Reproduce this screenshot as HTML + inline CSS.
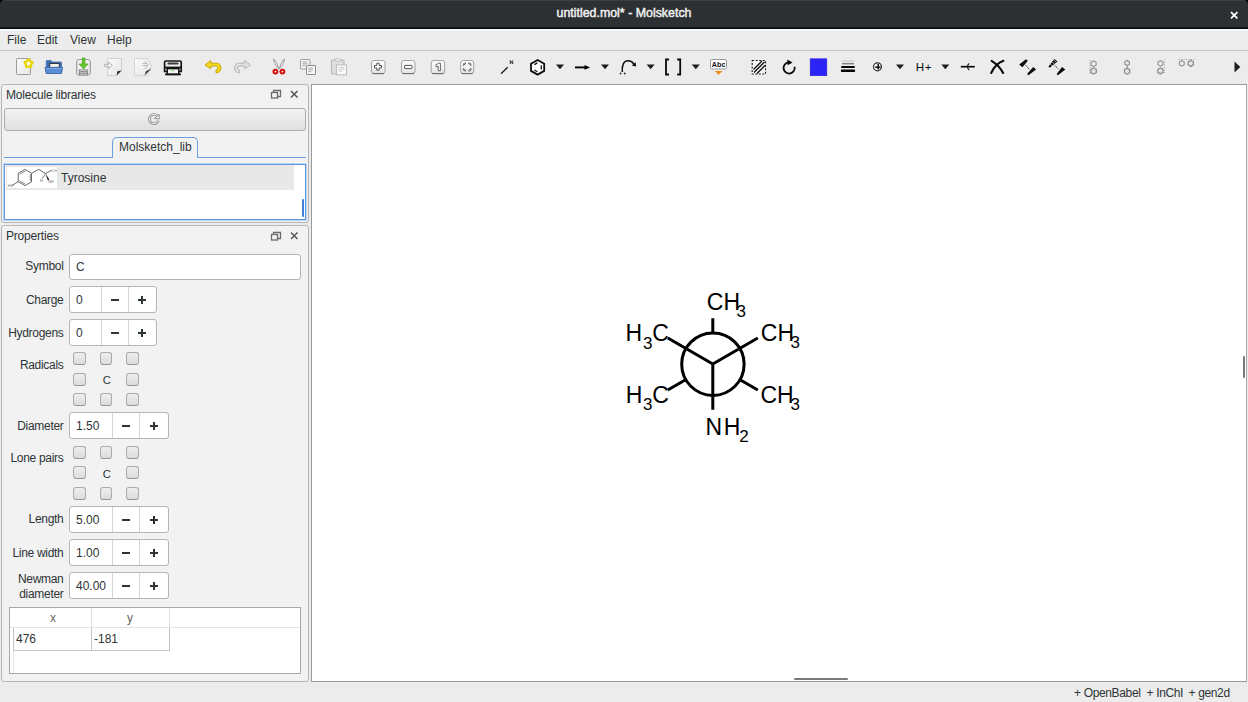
<!DOCTYPE html>
<html><head><meta charset="utf-8">
<style>
*{box-sizing:border-box;margin:0;padding:0}
html,body{width:1248px;height:702px;overflow:hidden;background:#ececec;font-family:"Liberation Sans",sans-serif;font-size:12px;color:#2e3436}
.a{position:absolute}
#title{left:0;top:0;width:1248px;height:27px;background:#2d3033;border-top:1px solid #3b3f42;border-radius:5px 5px 0 0}
#title .t{left:0;width:1248px;top:6px;text-align:center;color:#f0f0f0;font-weight:normal;font-size:12.4px;line-height:13px;-webkit-text-stroke:0.45px #f0f0f0}
#tline1{left:0;top:27px;width:1248px;height:1px;background:#141719}
#tline2{left:0;top:28px;width:1248px;height:1px;background:#0a0c0c}
#tline3{left:0;top:29px;width:1248px;height:2px;background:linear-gradient(#fdfdfd,#f4f4f4)}
.menu{top:34px;line-height:12px;font-size:12px;color:#2e3436}
#mline{left:0;top:50px;width:1248px;height:1px;background:#c8c8c8}
#mline2{left:0;top:50px;width:1248px;height:1px;background:#f8f8f8}
.dock{left:1px;width:308px;border:1px solid #b6b6b6;border-radius:3px;background:#f2f2f2}
.dtitle{left:6px;line-height:12px;color:#2e3436;letter-spacing:-0.2px}
.fl{width:10px;height:9px}
.cl{width:8px;height:8px}
#canvas{left:311px;top:84px;width:936px;height:598px;background:#fff;border:1px solid #9a9a9a;border-right-color:#a8a8a8}
.lbl{text-align:right;width:60px;left:3.5px;line-height:12px;letter-spacing:-0.3px;white-space:nowrap}
.spin{left:69px;height:26px;background:#fff;border:1px solid #b5b5b5;border-radius:3px}
.spin .v{left:6px;top:7px;line-height:12px;color:#2e3436}
.pm{background:#2e3436}
.spin .d1,.spin .d2{top:0;width:1px;height:25px;background:#d4d4d4}
.cb{width:13px;height:13px;border:1px solid #ababab;border-bottom-color:#959595;border-radius:3px;background:linear-gradient(#eeeeee,#dcdcdc)}
#status{left:0;top:682px;width:1248px;height:20px;background:#ececec}
.st{top:5px;line-height:12px;letter-spacing:-0.35px;white-space:nowrap}
</style></head><body>
<div class="a" style="left:0;top:0;width:1248px;height:6px;background:#000"></div><div id="title" class="a"><div class="t a">untitled.mol* - Molsketch</div>
<svg class="a" style="left:1229px;top:8.5px" width="10" height="10" viewBox="0 0 10 10"><path d="M2 2.2L8.4 8.4M8.4 2.2L2 8.4" stroke="#fff" stroke-width="1.7"/></svg>
</div>
<div id="tline1" class="a"></div><div id="tline2" class="a"></div><div id="tline3" class="a"></div>
<div class="a menu" style="left:7px">File</div>
<div class="a menu" style="left:37px">Edit</div>
<div class="a menu" style="left:70px">View</div>
<div class="a menu" style="left:107px">Help</div>
<div id="mline" class="a"></div>

<!-- TOOLBAR -->
<svg class="a" style="left:0;top:0" width="1248" height="84" viewBox="0 0 1248 84">
<defs>
<linearGradient id="gp" x1="0" y1="0" x2="1" y2="1"><stop offset="0" stop-color="#fafafa"/><stop offset="1" stop-color="#e6e6e6"/></linearGradient>
<linearGradient id="gz" x1="0" y1="0" x2="0" y2="1"><stop offset="0" stop-color="#ffffff"/><stop offset="1" stop-color="#e4e4e4"/></linearGradient>
</defs>
<!-- 1 new -->
<rect x="16.5" y="58.5" width="14" height="16" rx="1" fill="url(#gp)" stroke="#9a9a9a"/>
<path d="M28.50 58.90 L30.38 60.91 L32.87 62.08 L31.54 64.49 L31.20 67.22 L28.50 66.70 L25.80 67.22 L25.46 64.49 L24.13 62.08 L26.62 60.91z" fill="#e9d600" stroke="#e9d600" stroke-width="1.6" stroke-linejoin="round"/>
<path d="M28.50 61.00 L29.26 62.55 L30.97 62.80 L29.74 64.00 L30.03 65.70 L28.50 64.90 L26.97 65.70 L27.26 64.00 L26.03 62.80 L27.74 62.55z" fill="#fff"/>
<!-- 2 open -->
<path d="M46.2 61.2 q0 -0.8 0.8 -0.8 h4 l1.5 1.5 h8.3 q0.8 0 0.8 0.8 v9.5 h-15.4z" fill="#3f6fb8" stroke="#2f5da5" stroke-width="0.6"/>
<rect x="49.8" y="63.5" width="9.4" height="4.2" fill="#f4f2ea" stroke="#2a2a2a" stroke-width="0.9"/>
<path d="M45 67.4 h17.6 l-1.2 6.1 h-15.2z" fill="#5a8fd4" stroke="#2d5aa0" stroke-width="0.8"/>
<path d="M46 68.3 h15.6" stroke="#8ab4e8" stroke-width="0.8"/>
<!-- 3 save -->
<rect x="76.5" y="59.5" width="14" height="15.6" rx="2.2" fill="#dcdcdc" stroke="#a0a0a0"/>
<rect x="78.5" y="60.5" width="10" height="8" fill="#fafafa"/>
<path d="M78.5 62.6 h10 M78.5 64.6 h10" stroke="#d8d0e4" stroke-width="0.6"/>
<rect x="79.5" y="70" width="8" height="5" fill="#f2f2f2" stroke="#7a7a7a" stroke-width="0.8"/>
<rect x="80.8" y="71.5" width="2.2" height="2.2" fill="none" stroke="#666" stroke-width="0.7"/>
<rect x="84.1" y="71.5" width="2.2" height="2.2" fill="none" stroke="#666" stroke-width="0.7"/>
<path d="M82.3 58 h2.6 v6 h3.2 l-4.5 5 l-4.5 -5 h3.2z" fill="#66c82e" stroke="#45a015" stroke-width="0.7"/>
<!-- 4 import -->
<path d="M107.5 58.5 h14 v12.5 l-4.5 4.5 h-9.5z" fill="url(#gp)" stroke="#d0d0d0"/>
<path d="M121.6 70.5 l-5 5 l0.8 -4.2z" fill="#2a2a2a"/>
<path d="M104.6 64.3 h4.2 v-2.2 l3.4 3.2 l-3.4 3.2 v-2.2 h-4.2z" fill="#fbfbfb" stroke="#a8a8a8" stroke-width="0.9"/>
<!-- 5 export -->
<path d="M134.5 58.6 h13 l4 7.5 l-4 9.5 h-13z" fill="url(#gp)" stroke="#d4d4d4"/>
<path d="M151.5 68.5 l-7 7 l1.5 -4.2z" fill="#2a2a2a"/>
<path d="M142.5 63.5 h4.5 M142.5 65.5 h4.5 M145 61 l3 4 l-3 4" fill="none" stroke="#bdbdbd" stroke-width="1"/>
<!-- 6 print -->
<path d="M164.6 62.2 q0 -1.2 1.2 -1.2 h14.2 q1.2 0 1.2 1.2 v9.3 h-16.6z" fill="#eeeeee" stroke="#161616" stroke-width="1.7"/>
<rect x="167.5" y="62.6" width="11" height="1.8" rx="0.6" fill="#3a3a3a"/>
<rect x="165" y="66.6" width="16" height="1.9" fill="#161616"/>
<rect x="167.2" y="68.6" width="11.6" height="5.8" fill="#f4f4f4" stroke="#121212" stroke-width="1.5"/>
<path d="M169.4 69.8 q3 0.2 5 1.4" stroke="#8ad874" stroke-width="1" fill="none"/>
<rect x="165" y="73.4" width="16" height="1.8" rx="0.6" fill="#121212"/>
<!-- 7 undo -->
<path d="M205 65 l5.8 -4.6 v2.8 h5.4 q4.6 0 4.6 4.8 q0 4.8 -4.8 4.8 v-2.8 q2 0 2 -2 q0 -2 -2 -2 h-5.2 v2.6z" fill="#f2dc20" stroke="#c8a800" stroke-width="1"/>
<!-- 8 redo -->
<path d="M250.5 65 l-5.8 -4.6 v2.8 h-5.4 q-4.6 0 -4.6 4.8 q0 4.8 4.8 4.8 v-2.8 q-2 0 -2 -2 q0 -2 2 -2 h5.2 v2.6z" fill="#e2e2e2" stroke="#b4b4b4" stroke-width="1"/>
<!-- 9 cut -->
<path d="M273.8 58.8 q-0.6 4.5 5 10 q-1.2 -5.5 -5 -10z" fill="#f4f4f4" stroke="#8a8a8a" stroke-width="0.8"/>
<path d="M284.2 58.8 q0.6 4.5 -5 10 q1.2 -5.5 5 -10z" fill="#f4f4f4" stroke="#8a8a8a" stroke-width="0.8"/>
<circle cx="275.4" cy="71.6" r="2.9" fill="#d40c0c"/>
<circle cx="282.4" cy="71.6" r="2.9" fill="#d40c0c"/>
<circle cx="275.4" cy="71.6" r="0.9" fill="#fff"/>
<circle cx="282.4" cy="71.6" r="0.9" fill="#fff"/>
<!-- 10 copy -->
<rect x="300.5" y="59.5" width="9.5" height="9.5" rx="1" fill="#f2f2f2" stroke="#9c9c9c"/>
<path d="M302.5 62 h5 M302.5 63.8 h5 M302.5 65.6 h3" stroke="#a8a8a8" stroke-width="1"/>
<rect x="306.5" y="65.5" width="9" height="9" rx="0.5" fill="#f6f6f6" stroke="#8c8c8c"/>
<path d="M308.3 68 h4.5 M308.3 69.8 h4.5 M308.3 71.6 h3" stroke="#aaaaaa" stroke-width="1"/>
<!-- 11 paste -->
<rect x="331.5" y="60" width="12.5" height="14" rx="1" fill="#dedede" stroke="#b4b4b4"/>
<rect x="335" y="58.8" width="5.5" height="2.6" rx="1" fill="#ececec" stroke="#b8b8b8" stroke-width="0.8"/>
<rect x="336.5" y="65" width="10" height="9.8" fill="#fafafa" stroke="#bcbcbc"/>
<path d="M338.5 67.5 h6 M338.5 69.3 h6 M338.5 71.1 h4" stroke="#cacaca" stroke-width="0.9"/>
<!-- 12-15 zoom -->
<g stroke="#a2a2a2" fill="url(#gz)">
<rect x="371.5" y="60.5" width="13.5" height="13" rx="2.5"/>
<rect x="401.5" y="60.5" width="13.5" height="13" rx="2.5"/>
<rect x="431.2" y="60.5" width="13.5" height="13" rx="2.5"/>
<rect x="460.7" y="60.5" width="13" height="13" rx="2.5"/>
</g>
<g stroke="#6e6e6e" stroke-width="1.1" fill="none">
<path d="M372.5 73.6 h11.5"/><path d="M402.5 73.6 h11.5"/><path d="M432.2 73.6 h11.5"/><path d="M461.7 73.6 h11"/>
</g>
<path d="M376.8 63.2 h2.4 v2.3 h2.3 v2.4 h-2.3 v2.3 h-2.4 v-2.3 h-2.3 v-2.4 h2.3z" fill="#fff" stroke="#555" stroke-width="1"/>
<rect x="404.6" y="65.4" width="7.4" height="3.2" rx="0.5" fill="#fff" stroke="#555" stroke-width="1"/>
<path d="M435.6 65 L438.6 63.2 H440.4 V70.8 H438.2 V66 L436.4 66.9z" fill="#fff" stroke="#555" stroke-width="0.9"/>
<g fill="#fff" stroke="#555" stroke-width="0.9">
<path d="M463.4 65.6 v-1.2 q0 -1.2 1.2 -1.2 h1.4z"/>
<path d="M471 65.6 v-1.2 q0 -1.2 -1.2 -1.2 h-1.4z"/>
<path d="M463.4 68.4 v1.2 q0 1.2 1.2 1.2 h1.4z"/>
<path d="M471 68.4 v1.2 q0 1.2 -1.2 1.2 h-1.4z"/>
</g>
<!-- 16 line N -->
<path d="M501 73.8 l6.7 -6.6" stroke="#1a1a1a" stroke-width="1.3"/>
<path d="M510.3 64 V60.4 L512.7 64 V60.4" fill="none" stroke="#3a3a3a" stroke-width="1"/>
<!-- 17 hexagon -->
<path d="M537.6 60 L544.2 63.7 V70.9 L537.6 74.6 L531 70.9 V63.7z" fill="#fff" stroke="#0c0c0c" stroke-width="1.8"/>
<path d="M534.4 64.6 L537.4 62.9 M541.3 65.2 V69.4 M534.4 70 L537.4 71.7" stroke="#111" stroke-width="1.3"/>
<!-- dropdowns -->
<g fill="#1b1e20">
<path d="M556 64.6 h8 l-4 4.6z"/>
<path d="M601 64.6 h8 l-4 4.6z"/>
<path d="M646.6 64.6 h8 l-4 4.6z"/>
<path d="M691.8 64.6 h8 l-4 4.6z"/>
<path d="M896 64.6 h8 l-4 4.6z"/>
<path d="M941.3 64.6 h8 l-4 4.6z"/>
</g>
<!-- 19 arrow -->
<path d="M575 67.4 h10" stroke="#050505" stroke-width="1.9"/>
<path d="M584.5 65 l5.6 2.4 l-5.6 2.4z" fill="#050505"/>
<!-- 21 curved arrow -->
<path d="M622.3 72 q-0.5 -11 5 -11.3 q4.5 -0.3 6.8 3.8" fill="none" stroke="#0a0a0a" stroke-width="1.5"/>
<path d="M631.8 65.6 l3.8 -3.4 l0.5 4.4z" fill="#0a0a0a"/>
<circle cx="620.6" cy="73.5" r="0.9" fill="#222"/><circle cx="624.7" cy="73.5" r="0.9" fill="#222"/>
<!-- 23 brackets -->
<path d="M669 59.5 h-3 v15 h3 M677.2 59.5 h3 v15 h-3" fill="none" stroke="#0a0a0a" stroke-width="1.8"/>
<!-- 25 abc -->
<rect x="710.5" y="59.5" width="16" height="9.5" rx="1.5" fill="#fff" stroke="#9a9a9a"/>
<text x="711.8" y="66.8" font-family="Liberation Sans" font-size="7.6" font-weight="bold" fill="#111" textLength="13.6" lengthAdjust="spacingAndGlyphs">Abc</text>
<path d="M714.8 71 h7.7 l-3.85 3.8z" fill="#f08a1a"/>
<!-- 26 hatch -->
<rect x="752.2" y="60.5" width="13.3" height="13.5" fill="#fafafa" stroke="#1a1a1a" stroke-width="1.1" stroke-dasharray="2 1.5"/>
<path d="M753.5 69.5 l8.5 -8.5 M754 72.5 l10.5 -10.5 M757 73.5 l8 -8" stroke="#111" stroke-width="1.4"/>
<!-- 27 rotate -->
<path d="M790.8 62.6 a5.6 5.6 0 1 0 3.8 4.2" fill="none" stroke="#0a0a0a" stroke-width="1.8"/>
<path d="M787.2 59.6 l5.3 2.9 l-4.8 2.8z" fill="#0a0a0a"/>
<!-- 28 blue -->
<rect x="810.2" y="58.8" width="16.6" height="16.9" fill="#2d24f6" stroke="#2818d8" stroke-width="0.6"/>
<!-- 29 lines -->
<path d="M842 61.2 h12" stroke="#bdbdbd" stroke-width="0.8"/>
<path d="M842 63.7 h12" stroke="#7a7a7a" stroke-width="1.3"/>
<path d="M842 67 h12" stroke="#050505" stroke-width="1.8" stroke-linecap="round"/>
<path d="M842 70.8 h12" stroke="#050505" stroke-width="2.4" stroke-linecap="round"/>
<!-- 30 circle plus -->
<circle cx="877.5" cy="66.8" r="4" fill="#f4f4f4" stroke="#333" stroke-width="1.2"/>
<path d="M878.2 64 v5.6 M875.3 67.2 h5.3" stroke="#0a0a0a" stroke-width="1.5"/>
<!-- 32 H+ -->
<text x="915.8" y="71.2" font-family="Liberation Sans" font-size="11.6" fill="#0a0a0a" dx="0 0.6">H+</text>
<!-- 34 bond -->
<path d="M960.8 66.7 h14" stroke="#0a0a0a" stroke-width="1.7"/>
<path d="M969.2 63.4 q-3.5 3.3 0 6.6" fill="none" stroke="#111" stroke-width="1.1"/>
<!-- 35 X -->
<path d="M991.6 60.8 q8 5 11.5 12.2 M1003.4 60.8 q-8 2.8 -12.2 12.2" fill="none" stroke="#0a0a0a" stroke-width="2.1" stroke-linecap="round"/>
<!-- 36 wedge hash -->
<path d="M1026 59.2 L1027.9 60.7 L1022.4 67.2 L1019.2 64.6z" fill="#0a0a0a"/>
<path d="M1025.8 65.2 l3.4 4" stroke="#222" stroke-width="1" stroke-dasharray="1.2 0.8"/>
<path d="M1033.2 67.1 L1036.1 69.6 L1028.4 75.3 L1027.1 74z" fill="#0a0a0a"/>
<!-- 37 -->
<path d="M1048.5 66.4 L1049.7 67.7 L1057.5 61.4 L1054.4 59.1z" fill="#0a0a0a"/>
<path d="M1050.2 63.8 l2.2 2.2 M1052.2 61.9 l2.4 2.4 M1054 60.3 l2.4 2.2" stroke="#eee" stroke-width="0.7"/>
<path d="M1054.6 65.3 l4.2 4" stroke="#222" stroke-width="1" stroke-dasharray="1.2 0.8"/>
<path d="M1062 67.1 L1065.3 69.6 L1057.9 75.3 L1056.7 74z" fill="#0a0a0a"/>
<!-- 38-41 align grey -->
<g fill="none" stroke="#8e8e8e" stroke-width="1.1">
<path d="M1096.11 65.25 L1093.60 66.70 L1091.09 65.25 L1091.09 62.35 L1093.60 60.90 L1096.11 62.35z"/>
<path d="M1096.28 72.55 L1093.60 74.10 L1090.92 72.55 L1090.92 69.45 L1093.60 67.90 L1096.28 69.45z" stroke-width="1.3" fill="#e6e6e6"/>
<path d="M1129.35 64.30 L1127.10 65.60 L1124.85 64.30 L1124.85 61.70 L1127.10 60.40 L1129.35 61.70z"/>
<path d="M1129.70 72.70 L1127.10 74.20 L1124.50 72.70 L1124.50 69.70 L1127.10 68.20 L1129.70 69.70z" stroke-width="1.3" fill="#e6e6e6"/>
<path d="M1162.82 64.80 L1160.40 66.20 L1157.98 64.80 L1157.98 62.00 L1160.40 60.60 L1162.82 62.00z"/>
<path d="M1163.00 72.40 L1160.40 73.90 L1157.80 72.40 L1157.80 69.40 L1160.40 67.90 L1163.00 69.40z" stroke-width="1.3" fill="#e6e6e6"/>
<path d="M1184.22 64.80 L1181.80 66.20 L1179.38 64.80 L1179.38 62.00 L1181.80 60.60 L1184.22 62.00z"/>
<path d="M1193.40 64.90 L1190.80 66.40 L1188.20 64.90 L1188.20 61.90 L1190.80 60.40 L1193.40 61.90z" stroke-width="1.3" fill="#e6e6e6"/>
</g>
<g stroke="#9a9a9a" stroke-width="1" stroke-dasharray="1 1.5">
<path d="M1090.1 60 v15"/><path d="M1164.3 59.5 v15"/><path d="M1178.5 59.5 h16"/>
</g>
<path d="M1127.1 66 v2" stroke="#8a8a8a"/>
<!-- 42 arrow right -->
<path d="M1234.5 61.5 l5.8 5.5 l-5.8 5.5z" fill="#1b1e20"/>
</svg>


<!-- DOCK 1 -->
<div class="a dock" style="top:84px;height:139px"></div>
<div class="a dtitle" style="top:89px">Molecule libraries</div>
<svg class="a" style="left:268px;top:86px" width="34" height="16" viewBox="268 86 34 16">
<rect x="271.5" y="92.5" width="6" height="5.5" fill="none" stroke="#6a6a6a" stroke-width="1.3"/>
<path d="M273.5 92.5 v-2 h7 v6 h-3" fill="none" stroke="#6a6a6a" stroke-width="1.3"/>
<path d="M291 91 l6.5 6.5 M297.5 91 l-6.5 6.5" stroke="#555" stroke-width="1.5"/>
</svg>
<div class="a" style="left:4px;top:108px;width:302px;height:23px;border:1px solid #ababab;border-radius:3px;background:linear-gradient(#f2f2f2,#e0e0e0)"></div>
<svg class="a" style="left:144px;top:110px" width="20" height="20" viewBox="144 110 20 20">
<path d="M157.6 116.2 a4.6 4.6 0 1 0 0.8 4.4" fill="none" stroke="#8c8c8c" stroke-width="2.6"/>
<path d="M157.6 116.2 a4.6 4.6 0 1 0 0.8 4.4" fill="none" stroke="#f8f8f8" stroke-width="1"/>
<path d="M154.6 118.4 l4.6 -4 v4.6z" fill="#f6f6f6" stroke="#8c8c8c" stroke-width="0.9"/>
</svg>
<!-- tab bar -->
<div class="a" style="left:4px;top:157px;width:302px;height:1px;background:#6aa0dd"></div>
<div class="a" style="left:112px;top:137px;width:86px;height:21px;border:1px solid #6aa0dd;border-bottom:none;border-radius:5px 5px 0 0;background:#f2f2f2"></div>
<div class="a" style="left:119px;top:141px;line-height:12px;color:#2e3436">Molsketch_lib</div>
<!-- list -->
<div class="a" style="left:4px;top:164px;width:302px;height:56px;border:1px solid #5a98e0;box-shadow:0 0 0 0.5px #8ab8ec;background:#fff"></div>
<div class="a" style="left:6px;top:165px;width:288px;height:25px;background:#e8e8e8"></div>
<div class="a" style="left:7px;top:167px;width:50px;height:21px;background:#fff"></div>
<svg class="a" style="left:7px;top:167px" width="50" height="21" viewBox="7 167 50 21">
<g fill="none" stroke="#555" stroke-width="0.9">
<path d="M25 169.4 L31.5 173.3 V181.9 L25 185.6 L18.2 181.6 V173.4z"/>
<path d="M18.2 181.6 L11.8 185.6 M31.5 173.3 L38.7 169.3 L45.5 173.5 L51.9 170.1"/>
<path d="M19.6 174.3 L25.2 171 M19.6 180.8 L25 184 M30.2 174.2 V181" stroke-width="0.7"/>
</g>
<path d="M45.5 173.5 L42 179" stroke="#666" stroke-width="1.2" stroke-dasharray="0.8 0.7"/>
<path d="M45.3 173.2 L49.3 179.4 L47.9 180.4z" fill="#111"/>
<text x="8" y="187.4" font-size="3.6" font-family="Liberation Sans" fill="#666">HO</text>
<text x="40" y="181.6" font-size="3.6" font-family="Liberation Sans" fill="#666">H</text>
<text x="48.3" y="182.6" font-size="3.6" font-family="Liberation Sans" fill="#666">NH</text>
<text x="52" y="171.6" font-size="3.6" font-family="Liberation Sans" fill="#888">CH</text>
</svg>
<div class="a" style="left:61px;top:172px;line-height:12px;color:#2e3436">Tyrosine</div>
<div class="a" style="left:302px;top:199px;width:2px;height:18px;background:#3c82dc;border-radius:1px"></div>

<!-- DOCK 2 -->
<div class="a dock" style="top:225px;height:457px"></div>
<div class="a dtitle" style="top:230px">Properties</div>
<svg class="a" style="left:268px;top:228px" width="34" height="16" viewBox="268 228 34 16">
<rect x="271.5" y="234.5" width="6" height="5.5" fill="none" stroke="#6a6a6a" stroke-width="1.3"/>
<path d="M273.5 234.5 v-2 h7 v6 h-3" fill="none" stroke="#6a6a6a" stroke-width="1.3"/>
<path d="M291 232.5 l6.5 6.5 M297.5 232.5 l-6.5 6.5" stroke="#555" stroke-width="1.5"/>
</svg>

<div class="a lbl" style="top:260px">Symbol</div>
<div class="a" style="left:69px;top:254px;width:232px;height:26px;background:#fff;border:1px solid #b3b3b3;border-radius:3px"><div class="a" style="left:6px;top:6px;line-height:12px">C</div></div>

<div class="a lbl" style="top:294px">Charge</div>
<div class="a spin" style="top:286px;width:88px;height:27px"><div class="a v">0</div><div class="a d1" style="left:31px"></div><div class="a d2" style="left:58px"></div>
<div class="a pm" style="left:40.8px;top:11.799999999999999px;width:8px;height:1.8px"></div>
<div class="a pm" style="left:67.9px;top:11.799999999999999px;width:8px;height:1.8px"></div><div class="a pm" style="left:71.0px;top:8.7px;width:1.8px;height:8px"></div></div>

<div class="a lbl" style="top:327px">Hydrogens</div>
<div class="a spin" style="top:319px;width:88px;height:27px"><div class="a v">0</div><div class="a d1" style="left:31px"></div><div class="a d2" style="left:58px"></div>
<div class="a pm" style="left:40.8px;top:11.799999999999999px;width:8px;height:1.8px"></div>
<div class="a pm" style="left:67.9px;top:11.799999999999999px;width:8px;height:1.8px"></div><div class="a pm" style="left:71.0px;top:8.7px;width:1.8px;height:8px"></div></div>

<div class="a lbl" style="top:359px">Radicals</div>
<div class="a cb" style="left:73px;top:352px"></div><div class="a cb" style="width:12px;left:100px;top:352px"></div><div class="a cb" style="left:126px;top:352px"></div>
<div class="a cb" style="left:73px;top:373px"></div><div class="a" style="left:102.8px;top:373.5px;line-height:12px;font-size:11.3px">C</div><div class="a cb" style="left:126px;top:373px"></div>
<div class="a cb" style="left:73px;top:393px"></div><div class="a cb" style="width:12px;left:100px;top:393px"></div><div class="a cb" style="left:126px;top:393px"></div>

<div class="a lbl" style="top:420px">Diameter</div>
<div class="a spin" style="top:412px;width:100px;height:27px"><div class="a v">1.50</div><div class="a d1" style="left:42px"></div><div class="a d2" style="left:69px"></div>
<div class="a pm" style="left:52px;top:11.799999999999999px;width:8px;height:1.8px"></div>
<div class="a pm" style="left:79.8px;top:11.799999999999999px;width:8px;height:1.8px"></div><div class="a pm" style="left:82.89999999999999px;top:8.7px;width:1.8px;height:8px"></div></div>

<div class="a lbl" style="top:452px">Lone pairs</div>
<div class="a cb" style="left:73px;top:446px"></div><div class="a cb" style="width:12px;left:100px;top:446px"></div><div class="a cb" style="left:126px;top:446px"></div>
<div class="a cb" style="left:73px;top:466px"></div><div class="a" style="left:102.8px;top:467.5px;line-height:12px;font-size:11.3px">C</div><div class="a cb" style="left:126px;top:466px"></div>
<div class="a cb" style="left:73px;top:487px"></div><div class="a cb" style="width:12px;left:100px;top:487px"></div><div class="a cb" style="left:126px;top:487px"></div>

<div class="a lbl" style="top:513px">Length</div>
<div class="a spin" style="top:506px;width:100px;height:27px"><div class="a v">5.00</div><div class="a d1" style="left:42px"></div><div class="a d2" style="left:69px"></div>
<div class="a pm" style="left:52px;top:11.799999999999999px;width:8px;height:1.8px"></div>
<div class="a pm" style="left:79.8px;top:11.799999999999999px;width:8px;height:1.8px"></div><div class="a pm" style="left:82.89999999999999px;top:8.7px;width:1.8px;height:8px"></div></div>

<div class="a lbl" style="top:547px">Line width</div>
<div class="a spin" style="top:539px;width:100px;height:27px"><div class="a v">1.00</div><div class="a d1" style="left:42px"></div><div class="a d2" style="left:69px"></div>
<div class="a pm" style="left:52px;top:11.799999999999999px;width:8px;height:1.8px"></div>
<div class="a pm" style="left:79.8px;top:11.799999999999999px;width:8px;height:1.8px"></div><div class="a pm" style="left:82.89999999999999px;top:8.7px;width:1.8px;height:8px"></div></div>

<div class="a lbl" style="top:573px">Newman</div>
<div class="a lbl" style="top:588px">diameter</div>
<div class="a spin" style="top:572px;width:100px;height:27px"><div class="a v">40.00</div><div class="a d1" style="left:42px"></div><div class="a d2" style="left:69px"></div>
<div class="a pm" style="left:52px;top:11.799999999999999px;width:8px;height:1.8px"></div>
<div class="a pm" style="left:79.8px;top:11.799999999999999px;width:8px;height:1.8px"></div><div class="a pm" style="left:82.89999999999999px;top:8.7px;width:1.8px;height:8px"></div></div>

<!-- table -->
<div class="a" style="left:9px;top:607px;width:292px;height:67px;border:1px solid #a8a8a8;background:#fff"></div>
<div class="a" style="left:10px;top:627px;width:290px;height:1px;background:#e4e4e4"></div>
<div class="a" style="left:91px;top:608px;width:1px;height:19px;background:#dedede"></div>
<div class="a" style="left:169px;top:608px;width:1px;height:19px;background:#dedede"></div>
<div class="a" style="left:50px;top:612px;line-height:12px;color:#666">x</div>
<div class="a" style="left:127px;top:612px;line-height:12px;color:#666">y</div>
<div class="a" style="left:13px;top:628px;width:157px;height:23px;border:1px solid #c4c4c4;border-top:none"></div>
<div class="a" style="left:91px;top:628px;width:1px;height:22px;background:#c4c4c4"></div>
<div class="a" style="left:13px;top:651px;width:1px;height:22px;background:#e6e6e6"></div>
<div class="a" style="left:16px;top:633px;line-height:12px">476</div>
<div class="a" style="left:94px;top:633px;line-height:12px">-181</div>

<div id="canvas" class="a"></div>
<svg class="a" style="left:0;top:0" width="1248" height="702" viewBox="0 0 1248 702">
<g stroke="#000" stroke-width="3" fill="none">
<circle cx="712.9" cy="364.2" r="31.2"/>
<path d="M712.8 364 L667.8 338 M712.8 364 L757.8 338 M712.8 363 L712.8 409.8"/>
<path d="M712.8 333 L712.8 318.3 M686 379.5 L667.8 390 M739.6 379.5 L757.8 390"/>
</g>
<g font-family="Liberation Sans" fill="#000" font-size="23">
<text id="t1" x="706.8" y="309.8">CH</text><text id="t1s" x="736.5" y="317.4" font-size="17">3</text>
<text id="t2" x="625.5" y="340.6">H</text><text id="t2s" x="643" y="348.6" font-size="17">3</text><text id="t2c" x="652.2" y="340.6">C</text>
<text id="t3" x="760.8" y="340.6">CH</text><text id="t3s" x="790.5" y="348" font-size="17">3</text>
<text id="t4" x="625.8" y="402.7">H</text><text id="t4s" x="643" y="410.3" font-size="17">3</text><text id="t4c" x="652.2" y="402.7">C</text>
<text id="t5" x="760.5" y="402.7">CH</text><text id="t5s" x="790.5" y="410" font-size="17">3</text>
<text id="t6" x="705.4" y="434.6" dx="0 1.6">NH</text><text id="t6s" x="739.2" y="442" font-size="17">2</text>
</g>
</svg>

<div class="a" style="left:794px;top:678px;width:54px;height:2px;background:#767b7d;border-radius:1px"></div>
<div class="a" style="left:1243px;top:356px;width:2px;height:22px;background:#767b7d;border-radius:1px"></div>
<div id="status" class="a"><div class="a st" style="left:1074px">+ OpenBabel</div><div class="a st" style="left:1146.5px">+ InChI</div><div class="a st" style="left:1188.5px">+ gen2d</div></div>
</body></html>
